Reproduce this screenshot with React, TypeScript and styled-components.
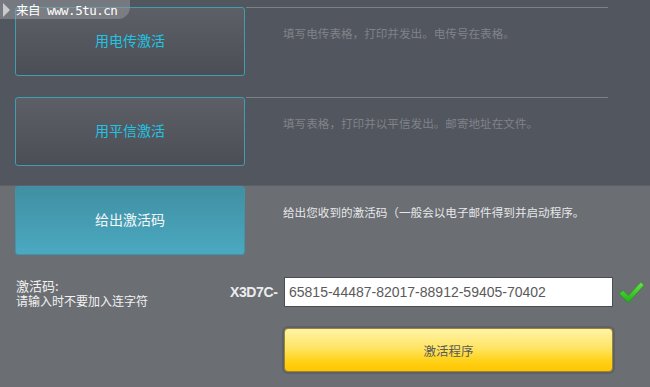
import {FC} from "react";
import styled, {createGlobalStyle} from "styled-components";

const GlobalStyle = createGlobalStyle`
	html,
	body {
		margin: 0;
		padding: 0;
		background: #6b6e73;
	}
`;

const Page = styled.div`
	position: relative;
	width: 650px;
	height: 387px;
	overflow: hidden;
	font-family: "Noto Sans CJK SC", "Liberation Sans", sans-serif;
	background: #6b6e73;
`;

const TopSection = styled.div`
	display: flex;
	flex-direction: column;
	gap: 21px;
	height: 178px;
	padding: 7px 0 0 15px;
	background: #52565e;
	border-bottom: 1px solid #5c5f65;
`;

const Row = styled.div`
	display: flex;
	align-items: flex-start;
	height: 69px;
`;

const OptionButton = styled.button<{$active?: boolean}>`
	box-sizing: border-box;
	width: 230px;
	height: 69px;
	border-radius: 3px;
	border: 1px solid ${(p) => (p.$active ? "#3f96a8" : "#3e9fb2")};
	background: ${(p) =>
		p.$active
			? "linear-gradient(180deg, #418fa2 0%, #4aa9c1 100%)"
			: "linear-gradient(180deg, #5c5f65 0%, #54575d 50%, #4b4e54 100%)"};
	color: ${(p) => (p.$active ? "#f4f8fa" : "#20c3e4")};
	font-family: inherit;
	font-size: 14px;
	padding: 0 0 3px;
	cursor: pointer;
`;

const Description = styled.div<{$line?: boolean; $bright?: boolean}>`
	box-sizing: border-box;
	width: 362px;
	margin-left: 1px;
	padding: ${(p) => (p.$line ? "17px" : "18px")} 0 0 37px;
	border-top: ${(p) => (p.$line ? "1px solid #7d8086" : "none")};
	color: ${(p) => (p.$bright ? "#e6e7e9" : "#80838a")};
	font-size: 11.6px;
	line-height: 16px;
	white-space: nowrap;
`;

const BottomSection = styled.div`
	display: flex;
	flex-direction: column;
	padding-left: 15px;
`;

const FormRow = styled.div`
	display: flex;
	align-items: center;
	margin-top: 21px;
`;

const Label = styled.div`
	display: flex;
	flex-direction: column;
	width: 214px;
	color: #f2f2f2;
	font-size: 12px;
	line-height: 14px;
	padding-left: 1px;
	padding-top: 2px;

	strong {
		font-weight: normal;
		font-size: 13px;
		line-height: 16px;
	}
`;

const Prefix = styled.span`
	width: 54px;
	color: #eceded;
	font-family: "Liberation Sans", sans-serif;
	font-weight: bold;
	font-size: 14px;
	letter-spacing: -0.4px;
`;

const CodeInput = styled.input`
	box-sizing: border-box;
	width: 329px;
	height: 30px;
	border: 1px solid #4a4d52;
	background: #fff;
	color: #5a5a5a;
	font-family: "Liberation Sans", sans-serif;
	font-size: 14px;
	padding: 0 0 0 4px;
	outline: none;
`;

const Check = styled.svg`
	margin-left: 5px;
	width: 27px;
	height: 25px;
`;

const ActivateButton = styled.button`
	box-sizing: border-box;
	margin: 20px 0 0 269px;
	width: 329px;
	height: 44px;
	border-radius: 4px;
	border: 1px solid #9a8436;
	box-shadow: 0 0 0 2px #5e6166;
	background: linear-gradient(180deg, #fff3a6 0%, #ffe565 45%, #ffd21a 75%, #ffc500 100%);
	color: #5a5a5a;
	font-family: inherit;
	font-size: 12.5px;
	padding: 0;
	cursor: pointer;
`;

const Watermark = styled.div`
	position: absolute;
	left: 0;
	top: 0;
	display: flex;
	align-items: center;
	gap: 6px;
	width: 127px;
	height: 19px;
	padding-left: 3px;
	background: rgba(150, 152, 156, 0.55);
	border-bottom-right-radius: 12px;
	color: #ffffff;
	font-family: "DejaVu Sans Mono", "Noto Sans CJK SC", monospace;
	font-size: 12.5px;
	letter-spacing: -0.5px;

	&::before {
		content: "";
		border-left: 7px solid #c9cacc;
		border-top: 7px solid transparent;
		border-bottom: 7px solid transparent;
	}
`;

const App: FC = () => {
	return (
		<Page>
			<GlobalStyle />
			<TopSection>
				<Row>
					<OptionButton>用电传激活</OptionButton>
					<Description $line>填写电传表格，打印并发出。电传号在表格。</Description>
				</Row>
				<Row>
					<OptionButton>用平信激活</OptionButton>
					<Description $line>填写表格，打印并以平信发出。邮寄地址在文件。</Description>
				</Row>
			</TopSection>
			<BottomSection>
				<Row>
					<OptionButton $active>给出激活码</OptionButton>
					<Description $bright>给出您收到的激活码（一般会以电子邮件得到并启动程序。</Description>
				</Row>
				<FormRow>
					<Label>
						<strong>激活码:</strong>
						<span>请输入时不要加入连字符</span>
					</Label>
					<Prefix>X3D7C-</Prefix>
					<CodeInput defaultValue="65815-44487-82017-88912-59405-70402" />
					<Check viewBox="0 0 26 24">
						<defs>
							<linearGradient id="tick" x1="0" y1="0" x2="0" y2="1">
								<stop offset="0" stopColor="#6fe04a" />
								<stop offset="1" stopColor="#1fae1a" />
							</linearGradient>
						</defs>
						<path
							d="M1 13 L5 10 L10 15 L22 2 L25 5 L10 22 Z"
							fill="url(#tick)"
							stroke="#1c8f17"
							strokeWidth="0.6"
							strokeLinejoin="round"
						/>
					</Check>
				</FormRow>
				<ActivateButton>激活程序</ActivateButton>
			</BottomSection>
			<Watermark>来自 www.5tu.cn</Watermark>
		</Page>
	);
};

export default App;
